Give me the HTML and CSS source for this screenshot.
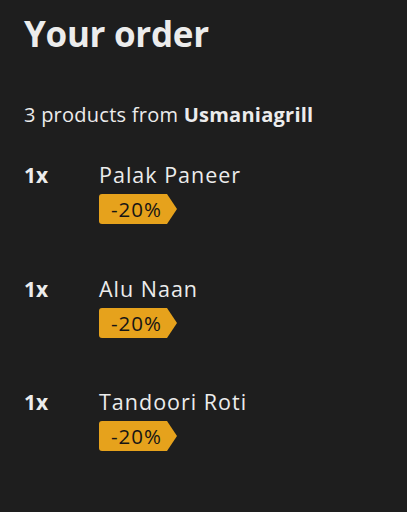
FILE: index.html
```html
<!DOCTYPE html>
<html lang="en">
<head>
<meta charset="utf-8">
<title>Your order</title>
<link rel="stylesheet" href="styles.css">
</head>
<body>
<main class="order">
  <h1 class="title">Your order</h1>
  <p class="summary">3 products from <strong>Usmaniagrill</strong></p>
  <ul class="items">
    <li class="item">
      <span class="qty">1x</span>
      <div class="info">
        <span class="name">Palak Paneer</span>
        <span class="tag">-20%</span>
      </div>
    </li>
    <li class="item">
      <span class="qty">1x</span>
      <div class="info">
        <span class="name">Alu Naan</span>
        <span class="tag">-20%</span>
      </div>
    </li>
    <li class="item">
      <span class="qty">1x</span>
      <div class="info">
        <span class="name">Tandoori Roti</span>
        <span class="tag">-20%</span>
      </div>
    </li>
  </ul>
</main>
</body>
</html>
```
FILE: styles.css
```css
html, body {
  margin: 0;
  padding: 0;
  background: #1e1e1e;
}
body {
  font-family: "Open Sans", "Noto Sans", sans-serif;
  color: #ececec;
}
.order {
  padding: 10px 24px 0;
}
.title {
  margin: 0;
  font-size: 35px;
  line-height: 48px;
  font-weight: 700;
  letter-spacing: -0.3px;
}
.summary {
  margin: 44px 0 0;
  font-size: 20px;
  line-height: 26px;
  letter-spacing: 0.25px;
}
.summary strong {
  font-weight: 700;
}
.items {
  list-style: none;
  margin: 33px 0 0;
  padding: 0;
  display: flex;
  flex-direction: column;
  gap: 50.5px;
}
.item {
  display: grid;
  grid-template-columns: 75px 1fr;
}
.qty {
  font-size: 21px;
  line-height: 28px;
  font-weight: 700;
}
.info {
  display: flex;
  flex-direction: column;
  align-items: flex-start;
  gap: 5px;
}
.name {
  font-size: 21.5px;
  line-height: 28px;
  font-weight: 400;
  letter-spacing: 1px;
}
.tag {
  position: relative;
  background: #e6a21c;
  color: #151515;
  font-size: 20.5px;
  font-weight: 500;
  letter-spacing: 1px;
  line-height: 30px;
  height: 30px;
  padding: 0 5px 0 12px;
  border-radius: 3px 0 0 3px;
  margin-right: 10px;
}
.tag::after {
  content: "";
  position: absolute;
  top: 0;
  left: 100%;
  border-style: solid;
  border-width: 15px 0 15px 10px;
  border-color: transparent transparent transparent #e6a21c;
}
```
